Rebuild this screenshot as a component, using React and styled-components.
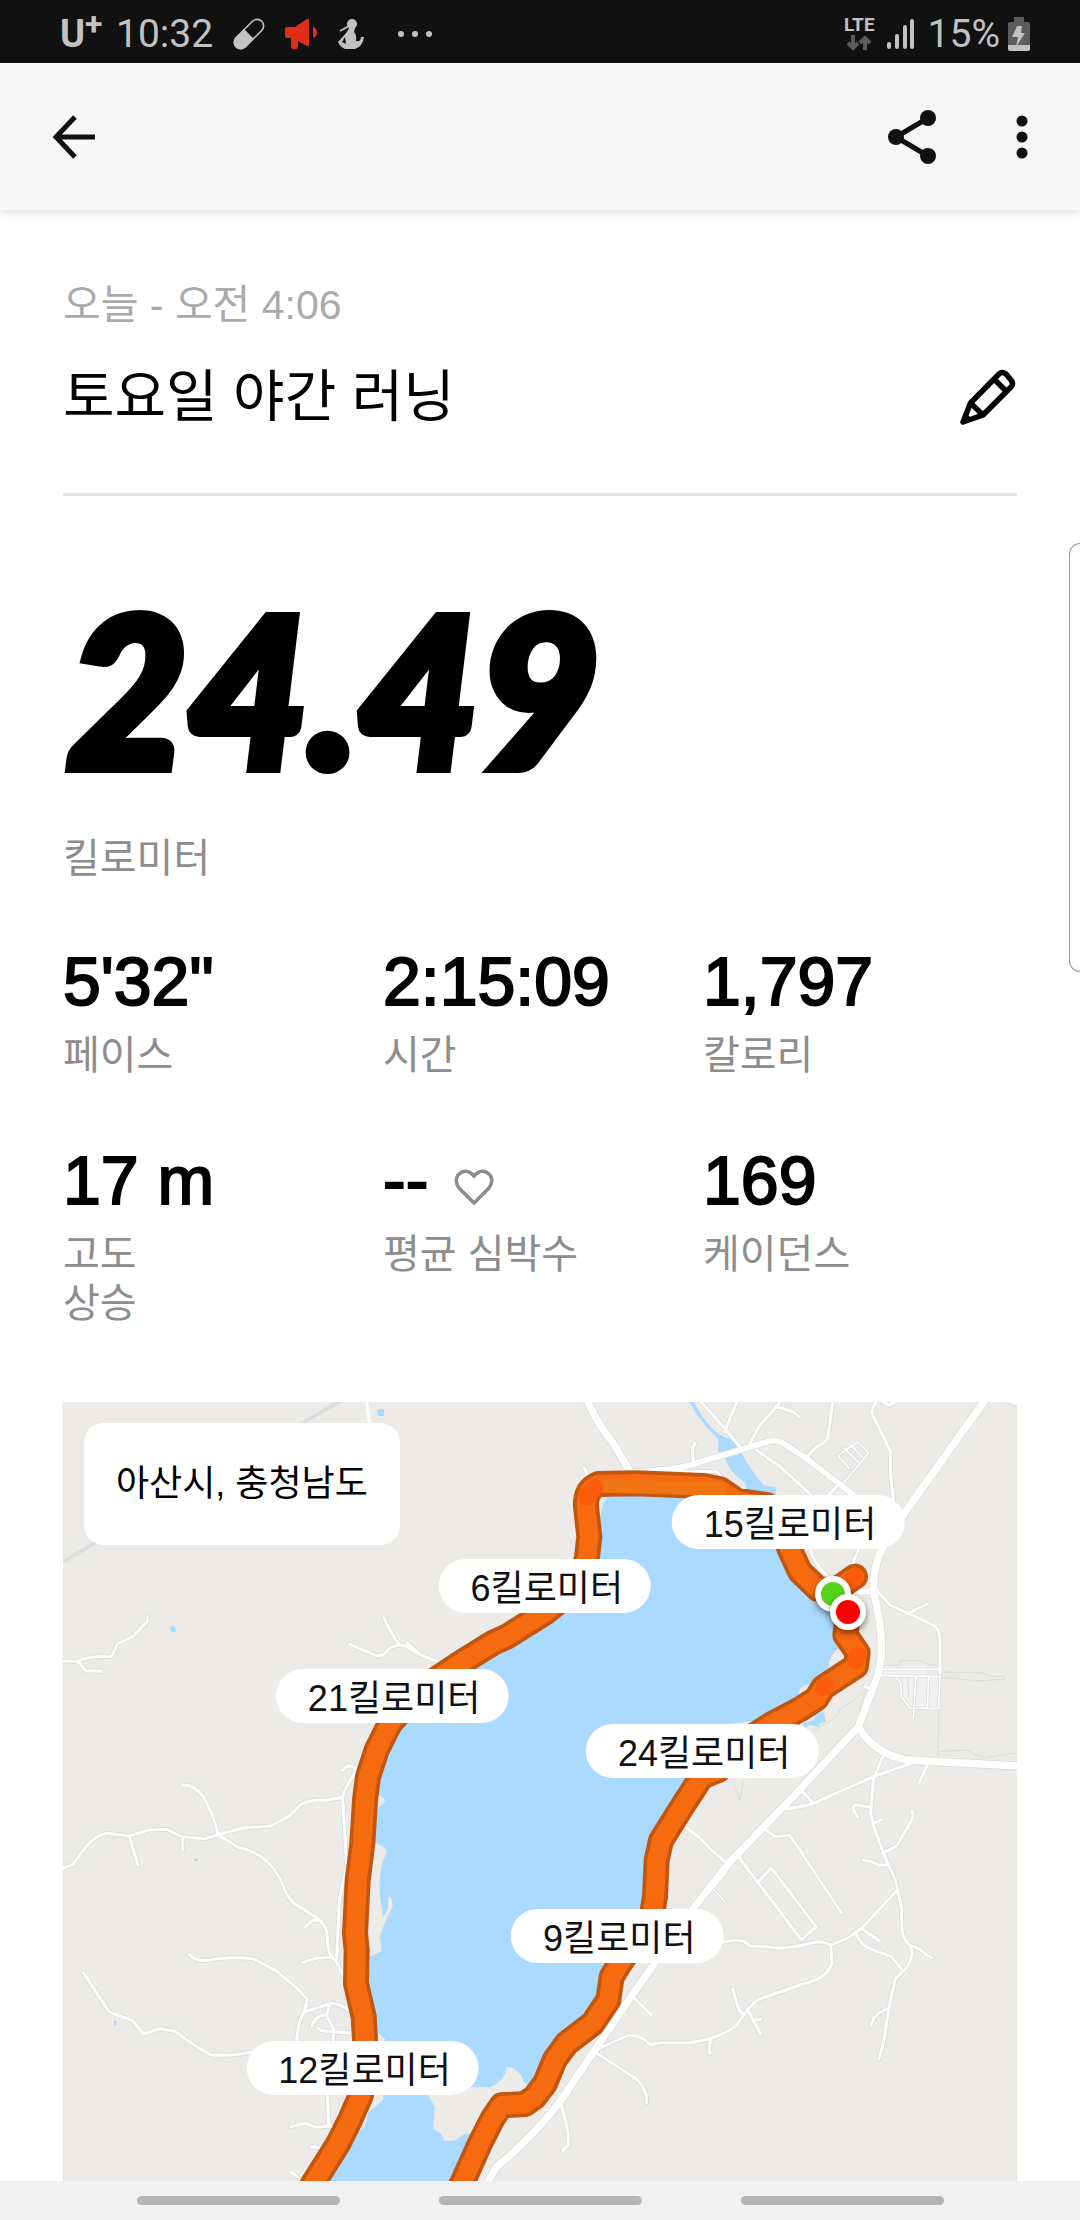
import React from "react";
import styled, { createGlobalStyle } from "styled-components";

const GlobalStyle = createGlobalStyle`
  * {
    box-sizing: border-box;
  }
  body {
    margin: 0;
    background: #ffffff;
    font-family: "Liberation Sans", "Noto Sans CJK KR", sans-serif;
    color: #000000;
  }
  button {
    display: flex;
    padding: 0;
    border: none;
    background: none;
    color: inherit;
    cursor: pointer;
  }
  svg {
    display: block;
  }
`;

const stats = [
  { value: "5'32\"", label: "페이스" },
  { value: "2:15:09", label: "시간" },
  { value: "1,797", label: "칼로리" },
  { value: "17 m", label: "고도 상승", narrow: true },
  { value: "--", label: "평균 심박수", heart: true },
  { value: "169", label: "케이던스" },
];

// centre of each marker, in percent of the map
const markers = [
  { text: "15킬로미터", x: 76, y: 15.4 },
  { text: "6킬로미터", x: 50.5, y: 23.6 },
  { text: "21킬로미터", x: 34.5, y: 37.7 },
  { text: "24킬로미터", x: 67, y: 44.8 },
  { text: "9킬로미터", x: 58.1, y: 68.5 },
  { text: "12킬로미터", x: 31.4, y: 85.5 },
];

const lake =
  "M1610 300 L2000 310 L2120 345 L2190 480 L2275 598 L2330 700 L2335 778 Q2306 790 2305 850 L2290 880 L2240 884 Q2212 890 2216 920 L2200 950 L2140 985 L2020 1000 L1970 1130 L1900 1190 L1800 1340 L1785 1480 L1775 1580 L1655 1760 L1590 1900 L1490 2000 L1450 2082 L1425 2088 L1392 2080 Q1388 2050 1358 2034 L1340 2030 Q1338 2070 1290 2092 L1235 2092 L1190 2115 L1105 2115 L1124 2150 L1120 2218 Q1150 2230 1152 2252 L1182 2252 L1218 2230 L1250 2236 L1170 2420 L750 2420 L830 2270 L915 2210 L925 2168 L970 2128 L965 2080 L975 1948 L945 1920 L910 1880 L890 1770 L925 1702 L965 1684 L960 1640 Q975 1590 998 1550 L993 1520 L985 1520 L985 1555 L970 1580 L960 1520 Q955 1430 980 1390 Q982 1370 945 1360 L930 1300 L948 1260 L975 1235 Q975 1220 950 1215 L925 1160 L990 1000 L1080 900 L1330 750 L1540 600 L1590 500 L1620 440 Q1615 360 1640 322 Z";

const stream =
  "M1888 36 Q1910 80 1950 122 L1975 148 L1974 184 L1992 198 Q2010 250 2055 278 L2060 300 L2150 330 L2147 292 L2112 286 Q2070 240 2040 180 L2015 148 L1985 138 Q1940 110 1902 36 Z";

const route = [
  "M2385 560 L2325 602 L2275 598 L2220 545 L2190 480 L2160 400 L2120 345 L2030 332 L1980 298 L1930 288 L1730 280 L1615 282 Q1575 300 1578 350 L1588 440 L1580 510 L1540 600 L1455 668 L1340 740 L1300 758 L1200 820 L1080 900 L990 1000 L950 1080 L924 1160 L915 1230 L907 1360 L893 1470 L885 1630 L890 1680 L888 1780 L911 1880 L915 1950 L915 2030 L903 2115 L870 2190 L835 2260 L765 2372 L730 2430",
  "M2362 690 L2356 735 L2393 788 L2388 828 L2290 892 L2270 925 L2220 958 L2140 1000 L2045 1060 L1975 1140 L1925 1160 L1860 1260 L1803 1352 L1790 1410 L1785 1520 L1775 1580 L1680 1720 L1655 1760 L1645 1830 L1598 1900 L1520 1960 L1485 2008 L1455 2080 L1425 2120 L1395 2142 L1325 2146 L1298 2185 L1260 2260 L1210 2372 L1180 2430",
];

const roads = [
  {
    width: 22,
    paths: [
      "M1582 30 Q1610 100 1660 160 L1705 236",
      "M2775 30 L2540 360 L2470 470 Q2436 530 2442 610 Q2468 720 2464 790 Q2464 840 2425 930 L2395 1010 L2190 1230 L2010 1415 L1900 1555 L1720 1810 L1500 2135 Q1420 2240 1310 2330 L1270 2400",
      "M2395 1010 Q2440 1090 2540 1110 L2875 1128",
    ],
  },
  {
    width: 17,
    paths: [
      "M1690 246 Q1840 246 1920 216 L2120 156 Q2150 146 2170 160 L2240 206 L2400 330",
      "M2380 605 L2450 605",
    ],
  },
  {
    width: 9,
    paths: [
      "M1924 36 Q1990 110 2040 170 M2030 36 L1994 126 M2160 36 L2146 54 L2098 108 L2070 160 M2146 48 L2200 66 L2216 80 M2318 36 L2304 140 Q2300 156 2270 170 L2236 206 M2450 30 L2434 66 L2492 186 Q2488 260 2502 340 M2460 30 L2485 46 L2510 34 M2840 30 L2872 42",
      "M1904 160 L1896 180 L1900 218 M1573 234 L1586 262 M1840 246 L1970 244 L1982 256 M2090 180 L2160 230 L2270 330 M2300 320 L2330 290 M2252 480 Q2262 520 2300 556 M2395 480 L2374 530",
      "M2450 600 L2490 645 L2610 700 Q2642 715 2640 750 L2640 850 M2540 672 L2602 642 M2415 890 L2428 894",
      "M9 814 L56 814 Q80 798 155 800 L172 762 L224 736 L262 694 L262 680 M56 816 L76 842 L124 844",
      "M868 762 L946 796 Q970 800 980 784 Q1000 760 1036 768 L1080 794 L1150 822 M972 682 Q990 730 1018 764 M1040 758 L1080 794",
      "M846 1142 Q872 1112 890 1142 Q850 1200 848 1222 L800 1230 Q740 1230 720 1246 L686 1280 L632 1308 L550 1314 L474 1334 L436 1346 L364 1340 L320 1318 L266 1320 L208 1338 L140 1330 Q110 1334 80 1368 L38 1424 L9 1434 M368 1186 Q400 1182 430 1220 Q460 1270 474 1334 M848 1222 L860 1430 L838 1530 L830 1708",
      "M208 1338 L234 1426 M368 1340 L368 1380 M474 1334 L534 1372 Q590 1384 620 1414 Q650 1440 666 1480 Q680 1520 700 1538 L776 1588 Q804 1610 802 1650 Q800 1690 830 1716 L850 1756 M776 1590 L756 1592 L732 1614 M728 1718 L770 1704 L812 1702",
      "M388 1694 Q410 1714 440 1712 Q500 1698 580 1706 L650 1744 L710 1794 L742 1828 L732 1866 Q712 1900 710 1955 M732 1866 L808 1842 Q830 1836 866 1860 M808 1845 L800 1876 Q764 1876 756 1908 M800 1876 L822 1920 L816 1990 M774 1914 L784 1922 L880 1930",
      "M70 1748 L104 1800 L148 1866 L218 1892 L250 1932 L300 1916 L346 1924 Q390 1960 450 1994 Q520 2000 600 1982 M802 2110 L806 2200 L820 2216 M692 2210 L736 2200 L768 2212 L812 2208 M754 2270 L784 2274 M694 2346 L730 2376",
      "M1500 2135 Q1530 2230 1524 2266 L1508 2282",
      "M1872 1308 L1920 1344 L1950 1376 L1994 1414 M2034 1398 L2224 1650 L2268 1610 L2134 1434 L2096 1474 M2110 1314 L2146 1340 L2188 1336 L2206 1360 L2344 1568",
      "M2160 1256 Q2240 1256 2300 1222 L2440 1160 L2560 1118 M2220 1196 L2258 1238 M2468 1100 L2440 1170 L2432 1270 L2442 1312 L2470 1390 L2506 1470 L2524 1550 L2526 1620 Q2530 1650 2552 1670 Q2566 1700 2534 1740 L2506 1766 L2486 1860 L2470 1960 L2456 2008",
      "M2602 1126 L2576 1180 M2432 1252 L2386 1244 L2378 1256 L2394 1282 M2438 1302 L2466 1288 M2556 1262 Q2564 1282 2550 1300 L2510 1368 L2468 1390 M2410 1410 L2438 1416 L2456 1426 L2480 1424 M2512 1500 L2406 1614 L2360 1646 L2310 1666 Q2290 1650 2250 1660 Q2160 1682 2120 1670 L2070 1668 Q2050 1646 2010 1652 L1960 1662",
      "M2312 1664 L2316 1720 Q2300 1766 2230 1782 L2096 1828 Q2070 1844 2030 1906 Q1980 1946 1890 1958 L1800 1958 L1770 1964 Q1740 1930 1700 1938 L1620 1974 M2018 1798 L2036 1858 L2048 1872 M2062 1858 L2102 1932 M2086 1890 L2102 1888 M1956 1942 Q1946 1960 1950 1992",
      "M2408 1618 L2458 1652 M2388 1632 Q2406 1670 2440 1680 L2494 1700 L2530 1744 M2556 1668 Q2580 1674 2600 1696 L2616 1702 M2486 1856 Q2440 1870 2434 1906",
      "M1720 1822 L1774 1874 M1610 1990 L1720 2060 Q1762 2090 1760 2138",
    ],
  },
  {
    width: 5,
    paths: [
      "M2345 286 L2424 192 Q2428 186 2420 182 L2392 156 L2336 196 Q2334 204 2344 208 L2368 236 M2352 174 L2398 220 M2372 164 L2408 202",
      "M2460 838 L2640 838 M2460 856 L2640 860 L2636 956 L2550 954 L2524 920 L2522 880 L2508 860 M2568 860 L2560 986 M2606 860 L2602 954 M1960 1494 L2000 1446 M1956 1494 L1994 1534",
    ],
  },
];

const fineLines =
  "M2476 826 L2520 826 L2520 812 L2586 812 L2604 824 L2640 826 M2640 846 L2760 848 L2800 860 L2835 858 L2833 868 L2760 872 L2640 862 M2636 956 L2634 1100 M2640 1084 L2720 1080 L2770 1104 L2871 1088 M2416 900 L2370 940 L2340 956 L2330 980 L2260 1024 M2398 960 L2416 900 M2020 1180 L2040 1230 L2050 1170 M2544 866 L2546 920";

const BackIcon = () => (
  <svg width="44" height="44" viewBox="0 0 44 44" fill="none" stroke="#111" strokeWidth="5">
    <path d="M23 2 L4 22 L23 42 M4 22 H43" />
  </svg>
);

const ShareIcon = () => (
  <svg width="48" height="54" viewBox="0 0 48 54" fill="#111">
    <path d="M8 27 L40 8 M8 27 L40 46" stroke="#111" strokeWidth="5" />
    <circle cx="8" cy="27" r="8" />
    <circle cx="40" cy="8" r="8" />
    <circle cx="40" cy="46" r="8" />
  </svg>
);

const MoreIcon = () => (
  <svg width="12" height="44" viewBox="0 0 12 44" fill="#111">
    <circle cx="6" cy="6" r="5.5" />
    <circle cx="6" cy="22" r="5.5" />
    <circle cx="6" cy="38" r="5.5" />
  </svg>
);

const PencilIcon = () => (
  <svg width="58" height="58" viewBox="0 0 58 58" fill="none" stroke="#000" strokeWidth="5.5" strokeLinejoin="round">
    <path d="M4 54 L11.5 35 L40 6 Q43 3 47 6 L52 12 Q55 16 52 19 L24 47 Z" />
    <path d="M35 11 L47 23 M11.5 35 L24 47 M4 54 L10 48" />
  </svg>
);

const HeartIcon = () => (
  <svg width="40" height="38" viewBox="0 0 40 38" fill="none" stroke="#8d8d8d" strokeWidth="3.5">
    <path d="M20 35 L5 20 Q0 13 4 7 Q12 -1 20 8 Q28 -1 36 7 Q40 13 35 20 Z" />
  </svg>
);

const PillIcon = () => (
  <svg width="32" height="32" viewBox="0 0 32 32">
    <g transform="rotate(45 16 16)">
      <rect x="9.5" y="-2" width="13" height="36" rx="6.5" fill="none" stroke="#c2c2c2" strokeWidth="1.6" />
      <path d="M9 16 H23 V28 A7 7 0 0 1 9 28 Z" fill="#c2c2c2" />
    </g>
  </svg>
);

const MegaphoneIcon = () => (
  <svg width="32" height="32" viewBox="0 0 32 32" fill="#e22d18">
    <path d="M0 11 Q0 9 2 9 H10 L22 1 Q24 0 24 2 V27 Q24 29 22 28 L13 23 V29 Q13 31 11 31 H8 Q6 31 6 29 V20 H2 Q0 20 0 18 Z M28 9 Q32 10 32 15 Q32 19 28 20 Z" />
  </svg>
);

const PersonIcon = () => (
  <svg width="28" height="32" viewBox="0 0 28 32" fill="#c2c2c2">
    <circle cx="15" cy="6" r="5" />
    <path d="M12 10 H18 L17 14 Q20 17 19 23 Q24 24 24 19 H27 Q26 28 18 31 H8 Q3 29 1 24 L10 14 Z M8 19 L5 24 L9 26 Z" fillRule="evenodd" />
    <path d="M3 13 L12 8" stroke="#c2c2c2" strokeWidth="2" />
  </svg>
);

const SignalIcon = () => (
  <svg width="28" height="32" viewBox="0 0 28 32" stroke="#c2c2c2" strokeWidth="4" strokeLinecap="round">
    <path d="M2 26 V29 M10 18 V29 M18 9 V29 M25 3 V29" />
  </svg>
);

const DataArrows = () => (
  <svg width="24" height="16" viewBox="0 0 24 16" fill="none" stroke="#5c5c5c" strokeWidth="4">
    <path d="M6 0 V13 M1 8 L6 13 L11 8 M18 15 V3 M13 8 L18 3 L23 8" />
  </svg>
);

const BatteryIcon = () => (
  <svg width="22" height="34" viewBox="0 0 22 34">
    <path d="M6 0 H16 V5 H20 Q22 5 22 7 V28 H0 V7 Q0 5 2 5 H6 Z" fill="#5c5c5c" />
    <path d="M0 28 H22 V32 Q22 34 20 34 H2 Q0 34 0 32 Z" fill="#c2c2c2" />
    <path d="M9 9 H14 L13 16 H17 L8 30 L10 20 H4 Z" fill="#c2c2c2" />
  </svg>
);

const MapDrawing = () => (
  <svg
    width="100%"
    height="100%"
    viewBox="9 36 2862 2337"
    preserveAspectRatio="xMidYMin slice"
    fill="none"
    strokeLinejoin="round"
    strokeLinecap="round"
    aria-hidden="true"
  >
    <path d="M0 520 L850 28" stroke="#dcdde0" strokeWidth="11" />
    <g fill="#aadaff">
      <path d={lake} />
      <path d={stream} />
      <path d="M952 60 L958 57 H972 V78 H958 L952 72 Z M328 714 L338 706 L346 714 V726 H334 Z M402 1406 H414 V1412 H402 Z M162 1892 H168 V1906 H162 Z" />
      <path d="M2226 1000 L2262 990 L2266 970 L2290 966 L2298 996 L2280 1000 L2276 1012 L2250 1004 L2234 1014 Z" />
    </g>
    <path d="M2530 866 H2640 V956 H2552 L2530 920 Z M2476 826 H2600 V856 H2476 Z" fill="#f1f1f1" />
    <path d={fineLines} stroke="#dcdcdc" strokeWidth="3" />
    <path d="M920 30 L928 100" stroke="#fff" strokeWidth="9" />
    {roads.map((group) => (
      <path key={group.width} d={group.paths.join(" ")} stroke="#dadbde" strokeWidth={group.width + 5} />
    ))}
    {[...roads].reverse().map((group) => (
      <path key={group.width} d={group.paths.join(" ")} stroke="#fff" strokeWidth={group.width} />
    ))}
    <path d={route.join(" ")} stroke="#c2560f" strokeWidth="78" />
    <path d={route.join(" ")} stroke="#f66a10" strokeWidth="56" />
    <path d="M1640 288 L1980 298" stroke="#f07d16" strokeWidth="40" opacity="0.6" />
    <path
      d="M1582 320 L1604 294 M2290 892 L2300 886 M2388 810 L2392 796 M2385 560 L2370 572"
      stroke="#ff5208"
      strokeWidth="52"
      opacity="0.6"
    />
  </svg>
);

const App = () => {
  return (
    <>
      <GlobalStyle />
      <Screen>
        <StatusBar>
          <Carrier>
            U<span>+</span>
          </Carrier>
          <StatusText>10:32</StatusText>
          <Notifications>
            <PillIcon />
            <MegaphoneIcon />
            <PersonIcon />
            <Dots>
              <i />
              <i />
              <i />
            </Dots>
          </Notifications>
          <Network>
            LTE
            <DataArrows />
          </Network>
          <SignalIcon />
          <StatusText>15%</StatusText>
          <BatteryIcon />
        </StatusBar>

        <AppBar>
          <button aria-label="뒤로">
            <BackIcon />
          </button>
          <Actions>
            <button aria-label="공유">
              <ShareIcon />
            </button>
            <button aria-label="더보기">
              <MoreIcon />
            </button>
          </Actions>
        </AppBar>

        <Content>
          <RunHeader>
            <RunDate>오늘 - 오전 4:06</RunDate>
            <TitleRow>
              <RunTitle>토요일 야간 러닝</RunTitle>
              <button aria-label="수정">
                <PencilIcon />
              </button>
            </TitleRow>
          </RunHeader>

          <Distance>24.49</Distance>
          <Label>킬로미터</Label>

          <Stats>
            {stats.map((stat) => (
              <div key={stat.label}>
                <Value>
                  {stat.value}
                  {stat.heart && <HeartIcon />}
                </Value>
                <Label $narrow={stat.narrow}>{stat.label}</Label>
              </div>
            ))}
          </Stats>

          <Map>
            <MapDrawing />
            <Place>아산시, 충청남도</Place>
            {markers.map((marker) => (
              <Marker key={marker.text} $x={marker.x} $y={marker.y}>
                {marker.text}
              </Marker>
            ))}
            <Pin $x={80.7} $y={24.7} $color="#55d31a" />
            <Pin $x={82.3} $y={27} $color="#ff0000" />
          </Map>
        </Content>

        <NavBar>
          <i />
          <i />
          <i />
        </NavBar>
        <EdgeHandle />
      </Screen>
    </>
  );
};

const Screen = styled.div`
  position: relative;
  display: flex;
  flex-direction: column;
  min-height: 100vh;
  overflow: hidden;
`;

const StatusBar = styled.div`
  display: flex;
  align-items: center;
  height: 63px;
  padding: 4px 50px 0 60px;
  background: #111111;
  color: #c2c2c2;
  font-family: Roboto, sans-serif;
`;

const Carrier = styled.div`
  display: flex;
  width: 56px;
  font-size: 38px;
  line-height: 40px;
  font-weight: 700;
  span {
    margin-top: -10px;
    font-size: 32px;
  }
`;

const StatusText = styled.div`
  font-size: 39px;
  line-height: 48px;
`;

const Notifications = styled.div`
  display: flex;
  flex: 1;
  gap: 20px;
  margin-left: 20px;
`;

const Dots = styled.div`
  display: flex;
  align-items: center;
  gap: 8px;
  margin-left: 13px;
  i {
    width: 6px;
    height: 6px;
    border-radius: 50%;
    background: #c2c2c2;
  }
`;

const Network = styled.div`
  display: flex;
  flex-direction: column;
  align-items: center;
  gap: 2px;
  margin-right: 12px;
  font-size: 19px;
  line-height: 16px;
  font-weight: 700;
  & ~ ${StatusText} {
    margin: 0 8px 0 13px;
  }
`;

const AppBar = styled.header`
  display: flex;
  align-items: center;
  justify-content: space-between;
  height: 147px;
  padding: 0 52px;
  background: #f7f7f7;
  box-shadow: 0 2px 10px rgba(0, 0, 0, 0.15);
`;

const Actions = styled.div`
  display: flex;
  align-items: center;
  gap: 80px;
`;

const Content = styled.main`
  display: flex;
  flex: 1;
  flex-direction: column;
  padding: 67px 63px 0;
`;

const RunHeader = styled.div`
  padding-bottom: 56px;
  border-bottom: 3px solid #e4e4e4;
`;

const RunDate = styled.div`
  font-size: 41px;
  line-height: 56px;
  color: #aaaaaa;
`;

const TitleRow = styled.div`
  display: flex;
  align-items: center;
  justify-content: space-between;
  margin-top: 24px;
`;

const RunTitle = styled.h1`
  margin: 0;
  font-size: 56px;
  line-height: 80px;
  font-weight: 400;
`;

const Distance = styled.div`
  margin-top: 72px;
  padding-left: 4px;
  font-family: Lato, sans-serif;
  font-size: 208px;
  line-height: 240px;
  font-weight: 900;
  font-style: italic;
  -webkit-text-stroke: 10px #000000;
`;

const Label = styled.div`
  width: ${({ $narrow }) => ($narrow ? "100px" : "auto")};
  font-size: 40px;
  line-height: 49px;
  color: #8d8d8d;
  ${Distance} + & {
    margin-top: 26px;
  }
`;

const Stats = styled.div`
  display: grid;
  grid-template-columns: repeat(3, 1fr);
  gap: 60px 6px;
  margin-top: 58px;
`;

const Value = styled.div`
  display: flex;
  align-items: center;
  gap: 26px;
  margin-bottom: 10px;
  font-size: 68px;
  line-height: 80px;
  -webkit-text-stroke: 2px #000000;
  svg {
    margin-top: 14px;
  }
`;

const Map = styled.section`
  position: relative;
  flex: 1 0 480px;
  height: 480px;
  margin-top: 74px;
  overflow: hidden;
  background: #ecebe7;
  svg {
    position: absolute;
  }
`;

const Place = styled.div`
  position: absolute;
  top: 21px;
  left: 21px;
  padding: 36px 32px;
  border-radius: 20px;
  background: #ffffff;
  font-size: 36px;
  line-height: 50px;
`;

const Marker = styled.div`
  position: absolute;
  top: ${({ $y }) => $y}%;
  left: ${({ $x }) => $x}%;
  transform: translate(-50%, -50%);
  padding: 5px 28px 0 32px;
  border-radius: 27px;
  background: #ffffff;
  font-size: 36px;
  line-height: 49px;
  color: #111111;
  white-space: nowrap;
`;

const Pin = styled.div`
  position: absolute;
  top: ${({ $y }) => $y}%;
  left: ${({ $x }) => $x}%;
  width: 36px;
  height: 36px;
  transform: translate(-50%, -50%);
  border: 6px solid #ffffff;
  border-radius: 50%;
  background: ${({ $color }) => $color};
  box-shadow: 0 3px 6px rgba(0, 0, 0, 0.5);
`;

const NavBar = styled.nav`
  display: flex;
  align-items: center;
  justify-content: center;
  gap: 99px;
  height: 39px;
  background: #f1f1f1;
  i {
    width: 203px;
    height: 9px;
    border-radius: 5px;
    background: #b5b5b5;
  }
`;

const EdgeHandle = styled.div`
  position: absolute;
  top: 543px;
  right: 0;
  width: 11px;
  height: 429px;
  border: 1px solid #999999;
  border-right: none;
  border-radius: 12px 0 0 12px;
`;

export default App;
